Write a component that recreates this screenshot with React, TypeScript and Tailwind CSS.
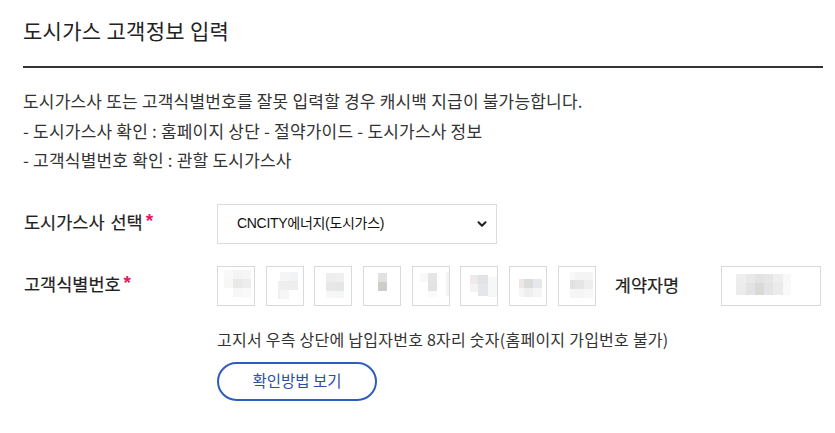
import { ChevronDown } from "lucide-react";

type Cell = [number, number, number, number, string];

// blurred digits inside the number boxes (mosaic blocks, relative to each box)
const digitMosaics: Cell[][] = [
  [
    [6, 3, 9, 9, "#f9f9f9"], [15, 3, 9, 9, "#f4f4f4"], [24, 3, 9, 9, "#f5f5f5"],
    [6, 12, 9, 9, "#f7f7f7"], [15, 12, 9, 9, "#e9e9e8"], [24, 12, 9, 9, "#ececec"],
    [15, 21, 9, 9, "#f7f7f7"], [24, 21, 9, 9, "#f9f9f9"],
  ],
  [
    [11, 14, 2, 18, "#f3eeee"],
    [13, 5, 9, 9, "#f5f5f5"], [22, 5, 9, 9, "#f2f3f5"],
    [13, 14, 9, 9, "#efeeee"], [22, 14, 9, 9, "#eeeeef"],
    [13, 23, 9, 9, "#f6f6f6"],
  ],
  [
    [11, 6, 9, 9, "#eeeeee"], [20, 6, 9, 9, "#efefef"],
    [11, 15, 9, 9, "#eae8e7"], [20, 15, 9, 9, "#e4e6e8"],
    [11, 24, 9, 7, "#f7f7f7"], [20, 24, 9, 7, "#f5f6f6"],
  ],
  [
    [14, 6, 9, 9, "#e1e1e1"], [14, 15, 9, 9, "#cbcdc8"],
  ],
  [
    [7, 6, 8, 9, "#f8f8f8"], [15, 6, 9, 9, "#e4e5e7"],
    [15, 15, 9, 9, "#e3e3e3"], [15, 24, 9, 6, "#fafafa"],
    [33, 5, 4, 24, "#f4f4f4"],
  ],
  [
    [9, 8, 8, 9, "#f0e9e9"], [17, 8, 10, 9, "#e1e3e7"], [27, 10, 10, 20, "#f7f7f7"],
    [9, 17, 8, 8, "#f5f4f3"], [17, 17, 10, 12, "#e5e6e9"],
  ],
  [
    [9, 12, 5, 9, "#ede7e5"], [14, 12, 9, 9, "#dcdcdc"], [23, 12, 9, 9, "#e6e8ec"],
    [9, 21, 5, 9, "#f6f6f6"], [14, 21, 9, 9, "#efefef"], [23, 21, 9, 9, "#f5f5f6"],
  ],
  [
    [11, 5, 5, 8, "#f8f8f8"], [16, 5, 9, 8, "#f4f4f4"], [25, 5, 9, 8, "#f4f4f4"],
    [11, 13, 5, 9, "#e1e1e1"], [16, 13, 9, 9, "#e5e5e5"], [25, 13, 9, 9, "#eeeeee"],
    [11, 22, 5, 9, "#f6f6f6"], [16, 22, 9, 9, "#f5f5f5"], [25, 22, 9, 9, "#f7f7f7"],
  ],
];

const nameMosaic: Cell[] = [
  [14, 7, 10, 9, "#eeeeee"], [24, 7, 9, 9, "#e8e8e8"], [33, 7, 9, 9, "#e3e3e3"],
  [42, 7, 9, 9, "#e6e6e6"], [51, 7, 10, 9, "#eeeeee"], [61, 7, 8, 9, "#f8f8f8"],
  [14, 16, 10, 12, "#ececec"], [24, 16, 9, 12, "#e1e3e4"], [33, 16, 9, 12, "#d9d9d8"],
  [42, 16, 9, 12, "#e3e4e6"], [51, 16, 10, 12, "#ebebeb"], [61, 16, 8, 12, "#f9f9f9"],
];

const Mosaic = ({ cells, w, h }: { cells: Cell[]; w: number; h: number }) => (
  <svg width={w} height={h} className="block">
    {cells.map(([x, y, cw, ch, fill], i) => (
      <rect key={i} x={x} y={y} width={cw} height={ch} fill={fill} />
    ))}
  </svg>
);

const Required = () => (
  <span className="relative -top-[2px] ml-[3px] font-['Liberation_Sans',sans-serif] text-[19px] font-bold text-[#e8175d] [-webkit-text-stroke:0px]">
    *
  </span>
);

const labelCls =
  "text-[17.5px] text-[#222] [-webkit-text-stroke:0.2px_#222]";

const App = () => {
  return (
    <main className="w-[835px] h-[433px] bg-white font-['Noto_Sans_CJK_KR',sans-serif] text-[#333]">
      <div className="ml-[23px] w-[800px] pt-[15px]">
        <h2 className="text-[21px] leading-[30px] tracking-[0.3px] text-[#222]">도시가스 고객정보 입력</h2>
        <div className="mt-[21px] h-[2px] bg-[#333]" />

        <div className="mt-[18px] text-[17px] leading-[29.5px] tracking-[0.2px]">
          <p>도시가스사 또는 고객식별번호를 잘못 입력할 경우 캐시백 지급이 불가능합니다.</p>
          <p>- 도시가스사 확인 : 홈페이지 상단 - 절약가이드 - 도시가스사 정보</p>
          <p>- 고객식별번호 확인 : 관할 도시가스사</p>
        </div>

        {/* 도시가스사 선택 */}
        <div className="mt-[29px] flex items-center">
          <div className={`w-[194px] pl-[1px] ${labelCls} [word-spacing:2px]`}>
            도시가스사 선택<Required />
          </div>
          <div className="flex h-[40px] w-[280px] items-center justify-between border border-[#dcdcdc] pl-[19px] pr-[7px]">
            <span className="font-['Liberation_Sans','Noto_Sans_CJK_KR',sans-serif] text-[14px] tracking-[-0.3px] text-[#111]">
              CNCITY에너지(도시가스)
            </span>
            <ChevronDown size={14} strokeWidth={3.5} className="text-[#222]" />
          </div>
        </div>

        {/* 고객식별번호 */}
        <div className="mt-[22px] flex items-center">
          <div className={`w-[194px] pl-[1px] ${labelCls}`}>
            고객식별번호<Required />
          </div>
          <div className="flex gap-[10.7px]">
            {digitMosaics.map((cells, i) => (
              <div key={i} className="h-[40px] w-[38px] border border-[#d9d9d9]">
                <Mosaic cells={cells} w={36} h={38} />
              </div>
            ))}
          </div>
          <div className={`ml-[19px] w-[106px] ${labelCls}`}>계약자명</div>
          <div className="h-[40px] w-[100px] border border-[#d9d9d9]">
            <Mosaic cells={nameMosaic} w={98} h={38} />
          </div>
        </div>

        <div className="ml-[194px]">
          <p className="mt-[22px] text-[16px] leading-[22px] tracking-[0.25px]">
            고지서 우측 상단에 납입자번호 8자리 숫자(홈페이지 가입번호 불가)
          </p>
          <button className="mt-[12px] flex h-[39px] w-[160px] items-center justify-center rounded-full border-2 border-[#2f5dbb] text-[15.5px] text-[#2c4fa3]">
            확인방법 보기
          </button>
        </div>
      </div>
    </main>
  );
};

export default App;
